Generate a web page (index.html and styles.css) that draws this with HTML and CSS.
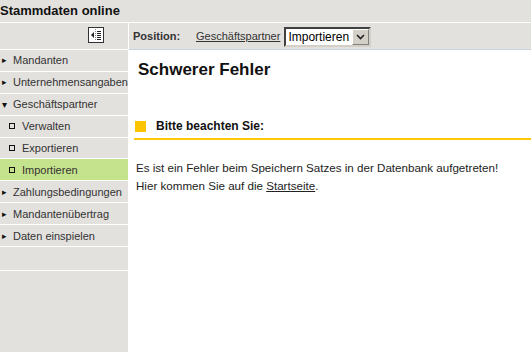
FILE: index.html
```html
<!DOCTYPE html>
<html lang="de">
<head>
    <meta charset="UTF-8">
    <title>Stammdaten online</title>
    <link rel="stylesheet" href="styles.css">
</head>
<body>
    <div class="app-header">Stammdaten online</div>

    <div class="toolbar">
        <div class="toolbar-side">
            <span class="toggle-icon">
                <svg width="16" height="16" viewBox="0 0 16 16">
                    <rect x="0.5" y="0.5" width="15" height="15" fill="#fff" stroke="#333"/>
                    <polygon points="3,8 6,5 6,11" fill="#222"/>
                    <line x1="7.5" y1="2" x2="7.5" y2="14" stroke="#888" stroke-dasharray="1 1"/>
                    <line x1="9" y1="4.5" x2="13" y2="4.5" stroke="#222"/>
                    <line x1="9" y1="6.5" x2="13" y2="6.5" stroke="#222"/>
                    <line x1="9" y1="8.5" x2="13" y2="8.5" stroke="#222"/>
                    <line x1="9" y1="10.5" x2="13" y2="10.5" stroke="#222"/>
                    <line x1="9" y1="12.5" x2="13" y2="12.5" stroke="#222"/>
                </svg>
            </span>
        </div>
        <div class="toolbar-main">
            <span class="position-label">Position:</span>
            <a href="#" class="crumb">Geschäftspartner</a>
            <div class="fake-select">
                <span class="fake-select-value">Importieren</span>
                <span class="fake-select-btn">
                    <svg width="9" height="6" viewBox="0 0 9 6">
                        <polyline points="1,1 4.5,4.5 8,1" fill="none" stroke="#222" stroke-width="1.6"/>
                    </svg>
                </span>
            </div>
        </div>
    </div>

    <div class="layout">
        <nav class="sidebar">
            <a href="#" class="nav-item"><span class="arrow">&#9656;</span>Mandanten</a>
            <a href="#" class="nav-item"><span class="arrow">&#9656;</span>Unternehmensangaben</a>
            <a href="#" class="nav-item"><span class="arrow down">&#9662;</span>Geschäftspartner</a>
            <a href="#" class="nav-item sub"><span class="box"></span>Verwalten</a>
            <a href="#" class="nav-item sub"><span class="box"></span>Exportieren</a>
            <a href="#" class="nav-item sub active"><span class="box"></span>Importieren</a>
            <a href="#" class="nav-item"><span class="arrow">&#9656;</span>Zahlungsbedingungen</a>
            <a href="#" class="nav-item"><span class="arrow">&#9656;</span>Mandantenübertrag</a>
            <a href="#" class="nav-item"><span class="arrow">&#9656;</span>Daten einspielen</a>
            <div class="nav-item empty"></div>
        </nav>

        <main class="content">
            <h1>Schwerer Fehler</h1>
            <div class="notice-head">
                <span class="notice-mark"></span>
                <span>Bitte beachten Sie:</span>
            </div>
            <p class="message">
                Es ist ein Fehler beim Speichern Satzes in der Datenbank aufgetreten!<br>
                Hier kommen Sie auf die <a href="#">Startseite</a>.
            </p>
        </main>
    </div>
</body>
</html>
```

FILE: styles.css
```css
* {
    margin: 0;
    padding: 0;
    box-sizing: border-box;
}

body {
    font-family: 'Liberation Sans', Arial, sans-serif;
    background-color: #fff;
    color: #222;
    overflow: hidden;
}

.app-header {
    height: 23px;
    line-height: 21px;
    background-color: #e3e1de;
    border-bottom: 1px solid #fff;
    font-size: 13px;
    font-weight: bold;
    color: #111;
}

.toolbar {
    display: flex;
    height: 27px;
}

.toolbar-side {
    width: 129px;
    background-color: #e3e1de;
    border-right: 1px solid #fff;
    border-bottom: 1px solid #fff;
    display: flex;
    justify-content: flex-end;
    align-items: center;
    padding-right: 24px;
}

.toggle-icon {
    display: block;
    height: 16px;
    margin-top: -3px;
}

.toolbar-main {
    flex: 1;
    background-color: #e3e1de;
    border-bottom: 1px solid #c9d2e0;
    display: flex;
    align-items: center;
    padding-left: 4px;
    font-size: 11px;
}

.position-label {
    font-weight: bold;
    color: #333;
    width: 63px;
}

.crumb {
    color: #333;
    margin-right: 4px;
}

.fake-select {
    display: flex;
    height: 20px;
    width: 87px;
    border: 2px solid #404040;
    border-right-color: #d4d0c8;
    border-bottom-color: #d4d0c8;
    background: #fff;
    margin-top: 2px;
}

.fake-select-value {
    flex: 1;
    font-size: 12px;
    line-height: 16px;
    padding-left: 2px;
    color: #000;
}

.fake-select-btn {
    width: 17px;
    background: #d4d0c8;
    border: 1px solid #808080;
    border-top-color: #fff;
    border-left-color: #fff;
    display: flex;
    align-items: center;
    justify-content: center;
}

.layout {
    display: flex;
}

.sidebar {
    width: 129px;
    min-height: 302px;
    background-color: #e3e1de;
    border-right: 1px solid #fff;
}

.nav-item {
    display: flex;
    align-items: center;
    height: 21.9px;
    border-bottom: 1px solid #fff;
    font-size: 11px;
    color: #333;
    text-decoration: none;
    white-space: nowrap;
    overflow: hidden;
}

.nav-item .arrow {
    width: 13px;
    padding-left: 2px;
    font-size: 9px;
    color: #111;
}

.nav-item .arrow.down {
    font-size: 10px;
}

.nav-item.sub .box {
    width: 6px;
    height: 6px;
    border: 1px solid #111;
    margin-left: 9px;
    margin-right: 7px;
}

.nav-item.active {
    background-color: #c5e28c;
}

.nav-item.empty {
    height: 24px;
}

.content {
    flex: 1;
    padding-left: 5px;
}

.content h1 {
    font-size: 17px;
    font-weight: bold;
    color: #111;
    margin: 9px 0 0 4px;
    line-height: 22px;
}

.notice-head {
    display: flex;
    align-items: center;
    gap: 10px;
    margin-top: 38px;
    padding-bottom: 5px;
    border-bottom: 2px solid #ffc800;
    font-size: 12px;
    font-weight: bold;
    color: #111;
}

.notice-mark {
    width: 11px;
    height: 11px;
    background-color: #ffc400;
    margin-left: 1px;
}

.message {
    margin-top: 19px;
    padding-left: 2px;
    font-size: 11.6px;
    line-height: 18px;
    color: #222;
}

.message a {
    color: #222;
}
```
